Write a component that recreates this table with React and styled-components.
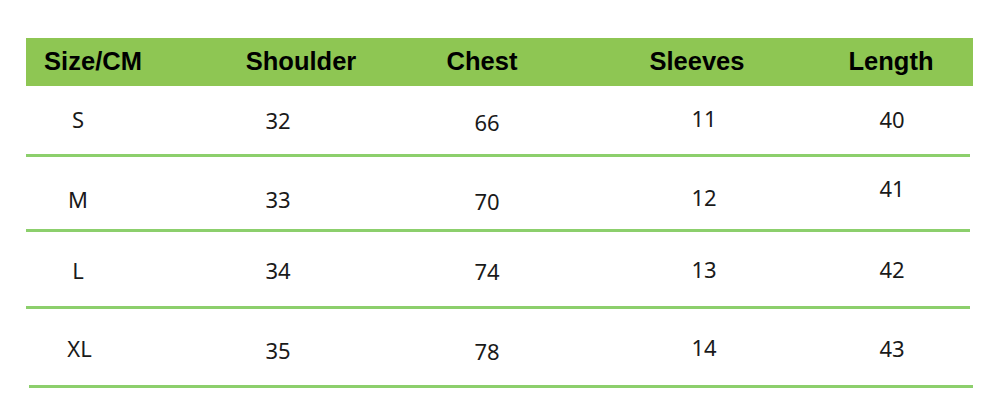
import React from "react";
import styled, { createGlobalStyle } from "styled-components";

const GlobalStyle = createGlobalStyle`
  html, body {
    margin: 0;
    padding: 0;
    background: #ffffff;
  }
`;

const Page = styled.div`
  width: 1000px;
  height: 419px;
  padding: 38px 27px 0 26px;
  box-sizing: border-box;
  background: #ffffff;
`;

const HeaderRow = styled.div`
  display: grid;
  grid-template-columns: 134px 282px 80px 350px 38px;
  height: 48px;
  background: #8ec653;
  align-items: center;
`;

const HeadCell = styled.div`
  display: flex;
  justify-content: center;
  white-space: nowrap;
  font-family: "Liberation Sans", Arial, sans-serif;
  font-weight: 700;
  font-size: 25.5px;
  color: #000000;
  padding-bottom: 1px;
`;

const Row = styled.div`
  display: grid;
  grid-template-columns: ${(p) => (p.$indent ? "101px" : "104px")} 296px 122px 312px 64px;
  height: ${(p) => p.$height}px;
  width: 944px;
  margin-left: ${(p) => p.$indent || 0}px;
  border-bottom: 3px solid #8ccf6c;
  padding-top: ${(p) => p.$drop}px;
  box-sizing: border-box;
  align-items: center;
`;

const Cell = styled.div`
  display: flex;
  justify-content: center;
  white-space: nowrap;
  font-family: "Noto Sans", "Open Sans", sans-serif;
  font-size: 22px;
  color: #1a1a1a;
  padding-bottom: ${(p) => (p.$lift > 0 ? p.$lift : 0)}px;
  padding-top: ${(p) => (p.$lift < 0 ? -p.$lift : 0)}px;
`;

const headers = ["Size/CM", "Shoulder", "Chest", "Sleeves", "Length"];

const rows = [
  { h: 71, drop: 0, cells: ["S", "32", "66", "11", "40"], lift: [2, 0, -4, 4, 2] },
  { h: 75, drop: 12, cells: ["M", "33", "70", "12", "41"], lift: [0, 0, -4, 4, 22] },
  { h: 77, drop: 2, cells: ["L", "34", "74", "13", "42"], lift: [0, 0, -2, 2, 2] },
  { h: 79, drop: 3, cells: ["XL", "35", "78", "14", "43"], lift: [2, -2, -4, 4, 2], indent: 3 },
];

export default function App() {
  return (
    <>
      <GlobalStyle />
      <Page>
        <HeaderRow>
          {headers.map((h) => (
            <HeadCell key={h}>{h}</HeadCell>
          ))}
        </HeaderRow>
        {rows.map((r) => (
          <Row key={r.cells[0]} $height={r.h} $drop={r.drop} $indent={r.indent}>
            {r.cells.map((c, i) => (
              <Cell key={i} $lift={r.lift[i]}>
                {c}
              </Cell>
            ))}
          </Row>
        ))}
      </Page>
    </>
  );
}
